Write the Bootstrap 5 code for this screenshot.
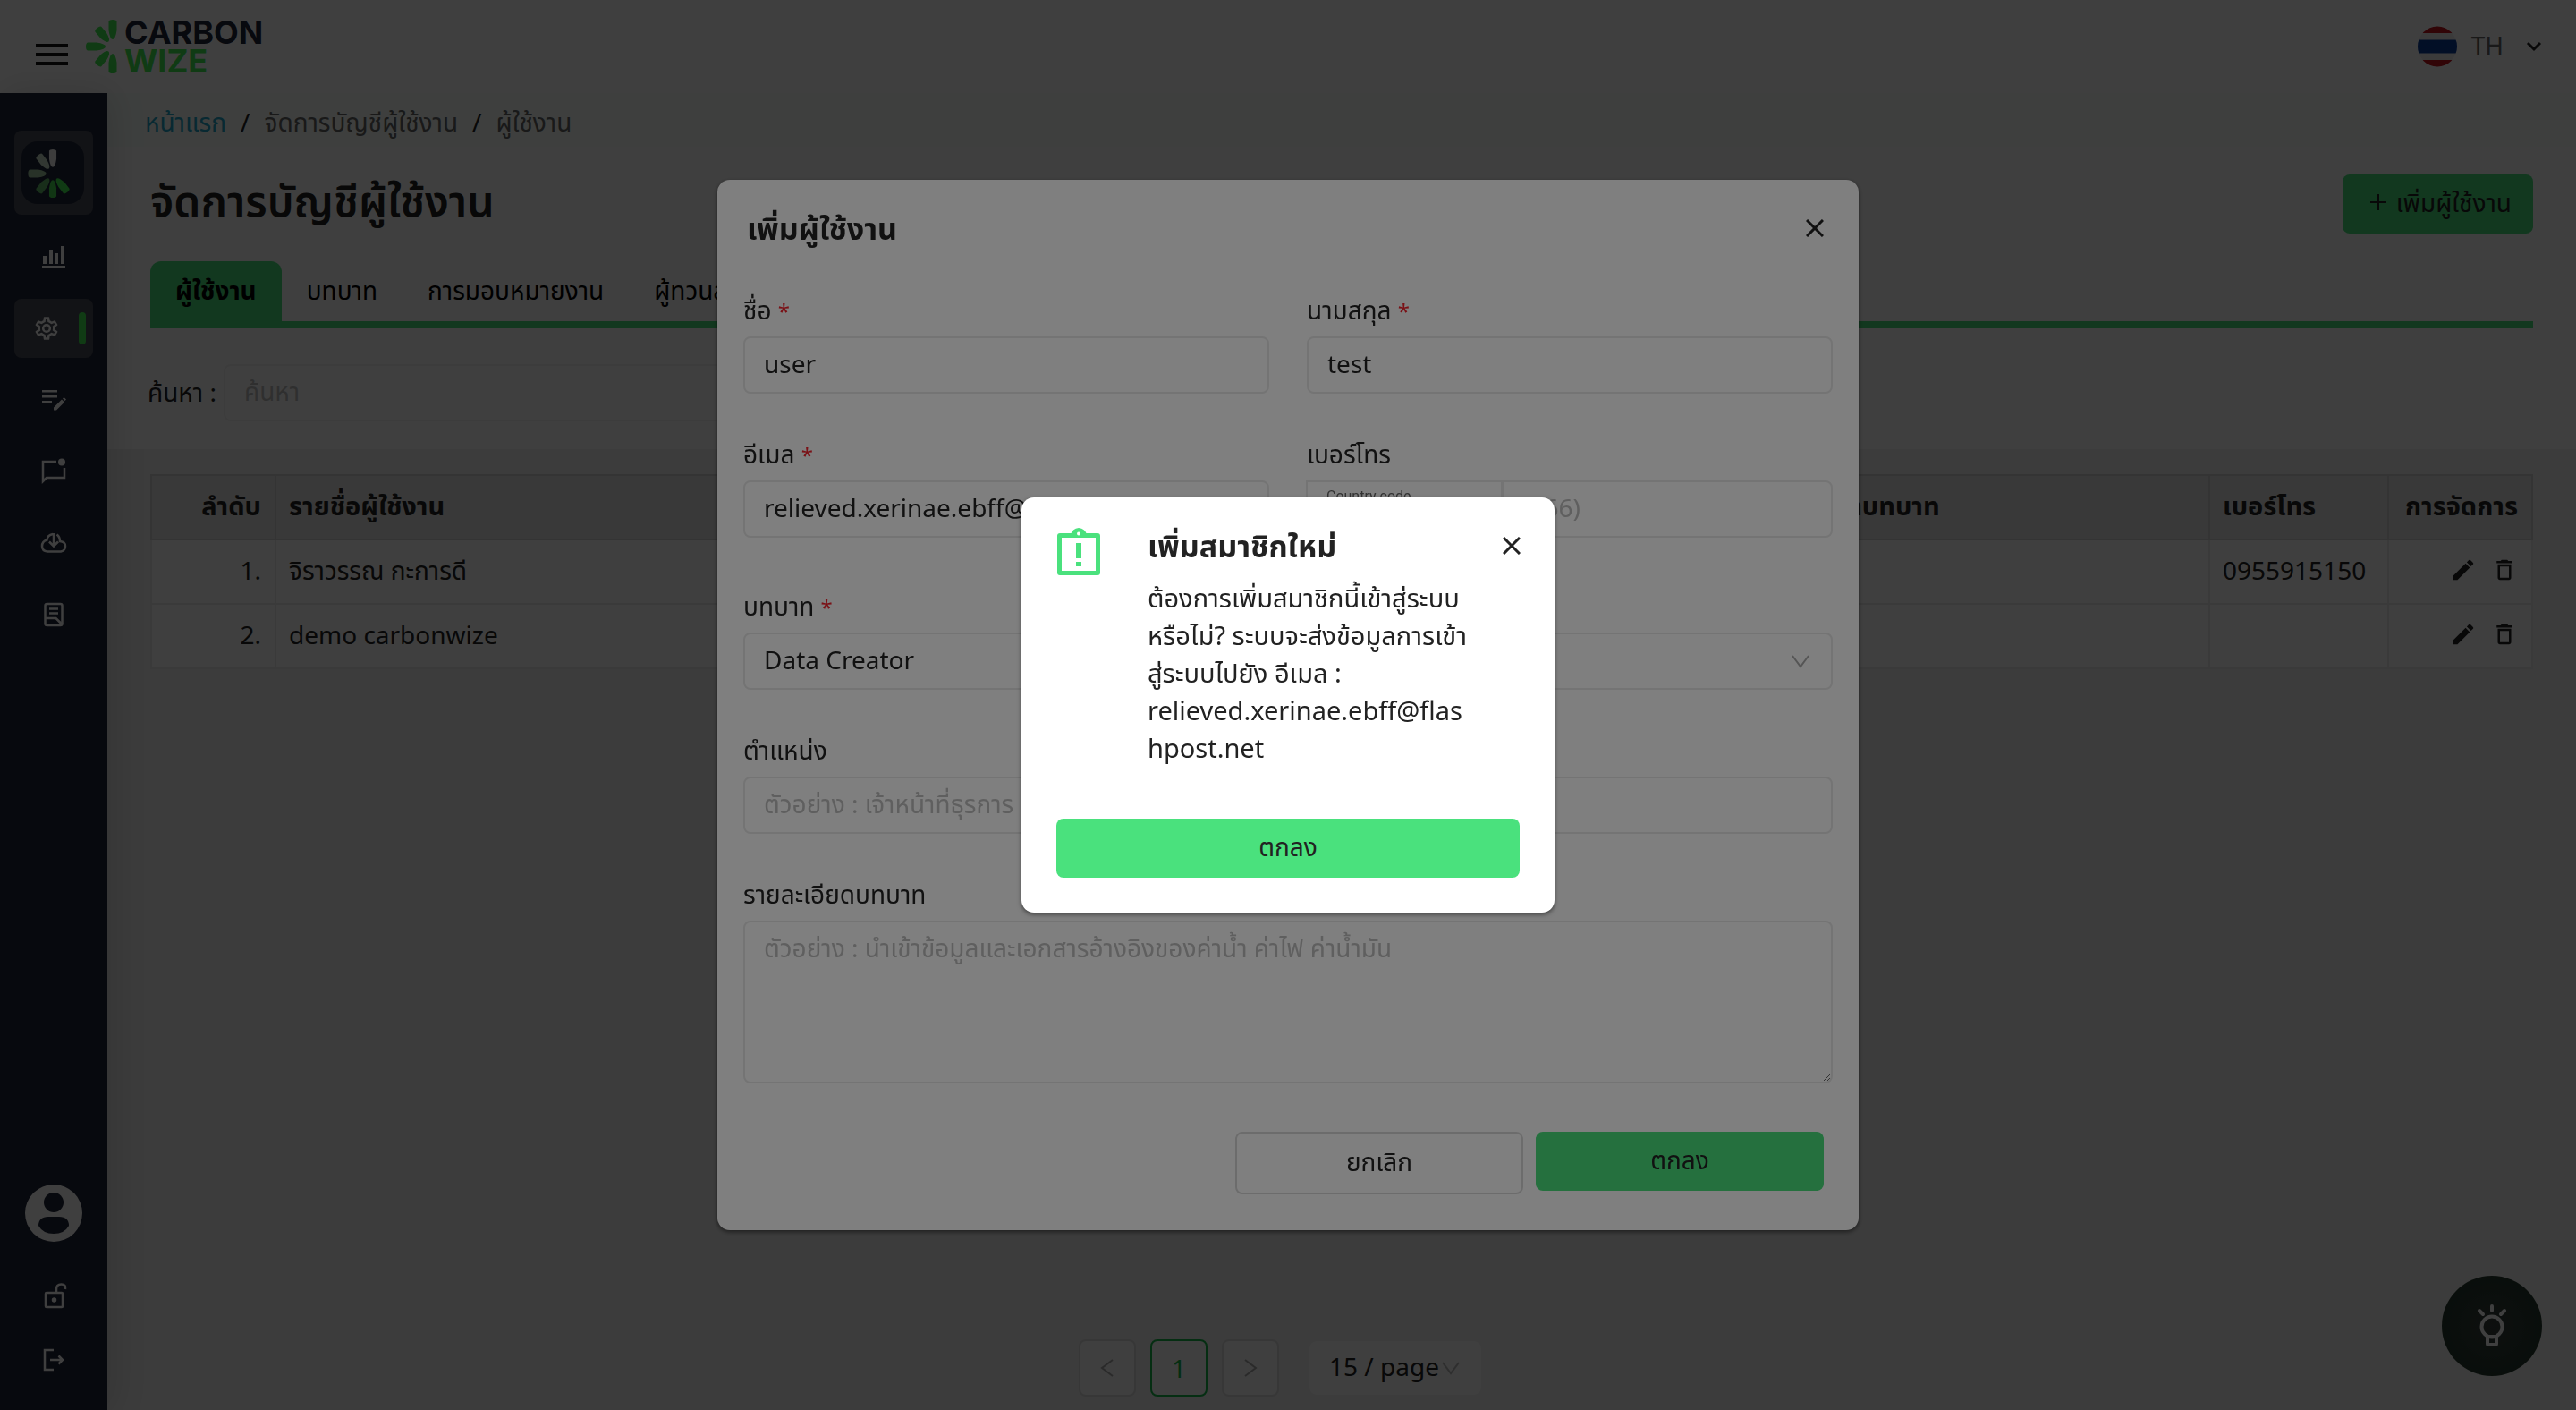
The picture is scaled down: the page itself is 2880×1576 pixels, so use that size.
<!DOCTYPE html>
<html lang="th">
<head>
<meta charset="utf-8">
<meta name="viewport" content="width=device-width, initial-scale=1">
<title>Carbon Wize</title>
<link href="https://cdn.jsdelivr.net/npm/bootstrap@5.3.0/dist/css/bootstrap.min.css" rel="stylesheet">
<style>
:root { --cw-green: #4ae17d; --cw-navy: #1e2438; --cw-ink: #222; --cw-line: #e8e8e8; }
body { font-family: "Noto Sans", "Noto Sans Thai", sans-serif; font-size: 28px; line-height: 44px; color: var(--cw-ink); background: #f0f0f0; }
svg { display: block; flex: none; }
.form-control, .form-select, .btn { font-size: 28px; line-height: 44px; color: var(--cw-ink); border-radius: 8px; }
.form-control, .form-select { padding: 6px 21px 10px; border: 2px solid var(--cw-line); background-color: #fff; }
.form-control::placeholder { color: #bfbfbf; }
.btn { padding: 9px 24px 13px; border: 0; }
.btn-cw { background: var(--cw-green); }
.btn-ghost { border: 2px solid #d9d9d9; }

.topbar { height: 104px; background: #fff; padding: 0 29px 0 36px; }
.burger { width: 48px; height: 48px; }
.brand-name { font: 700 36px/32px Inter, sans-serif; color: var(--cw-navy); }
.brand-name span { color: #40ee50; }
.lang { color: #666; }

.side { width: 120px; background: var(--cw-navy); color: #fff; padding: 42px 0 20px; box-shadow: 4px 0 40px rgba(0,0,0,.14); position: relative; }
.side a { color: #fff; width: 88px; border-radius: 8px; }
.side .home-tile { height: 94px; background: #4a4d58; padding: 12px 8px; margin-bottom: 7px; }
.home-tile svg { background: var(--cw-navy); border-radius: 18px; }
.side .nav-tile { height: 66px; margin: 7px 0; }
.side .nav-tile.active { background: #4a4d58; padding: 0 8px 0 22px; justify-content: space-between; }
.active-bar { width: 8px; height: 36px; border-radius: 4px; background: #40ee50; }
.side .foot-tile { height: 72px; }

.crumbs { height: 60px; padding: 4px 42px 0; background: #f8fffb; color: #666; }
.crumbs .breadcrumb { --bs-breadcrumb-divider-color: var(--cw-ink); --bs-breadcrumb-item-padding-x: 16px; }
.crumbs a { color: #22a6c8; text-decoration: none; }
.panel { background: #fff; padding: 31px 48px 31px; }
.page-title { font-size: 48px; line-height: 58px; font-weight: 600; margin: 0 0 8px; }
.cw-tabs { border-bottom: 8px solid var(--cw-green); margin-top: 31px; }
.cw-tabs .nav-link { padding: 11px 28px; height: 67px; border: 0; border-radius: 12px 12px 0 0; color: #000; line-height: 42px; }
.cw-tabs .nav-link.active { background: var(--cw-green); font-weight: 700; }
.finder { margin: 40px 0 0 -3px; }
.finder label { padding-bottom: 3px; }
.finder input { width: 600px; border-color: #f2f2f2; }
.list-area { padding: 28px 48px 15px; }
.cw-table { border: 2px solid #e0e0e0; margin: 0; }
.cw-table > :not(caption) > * > * { padding: 12px 15px 16px 14px; border: 2px solid #e8e8e8; height: 72px; line-height: 42px; color: var(--cw-ink); background: #fdfdfd; vertical-align: middle; }
.cw-table > thead > tr > th { background: #e4e4e4; border-color: #d0d0d0; font-size: 29px; }
.pager { padding-right: 138px; }
.pager .page-btn { width: 64px; height: 64px; padding: 0; border: 2px solid #ddd; background: #fdfdfd; color: #aaa; border-radius: 8px; }
.pager .page-btn.current { border-color: #14b848; color: #14b848; }
.pager .form-select { width: 192px; height: 60px; padding: 4px 0 8px 22px; border: 0; margin-left: 18px; background-color: #fdfdfd; background-position: right 23px center; background-size: 22px; background-image: url("data:image/svg+xml,%3Csvg xmlns='http://www.w3.org/2000/svg' viewBox='0 0 22 22'%3E%3Cpath d='M2 5l9 12 9-12' fill='none' stroke='%23bbb' stroke-width='2'/%3E%3C/svg%3E"); }
.helper { position: fixed; right: 38px; bottom: 38px; width: 112px; height: 112px; border-radius: 50%; border: 0; color: #fff; background: radial-gradient(#383f3c 0%, #263a30 65%, #1b3226 100%); }

.modal { background: rgba(0,0,0,.5); }
.modal-content { border: 0; border-radius: 14px; color: var(--cw-ink); box-shadow: 0 2px 5px rgba(0,0,0,.5); }
.user-modal { max-width: 1276px; }
.user-modal .modal-content { padding: 30px 29px 40px; }
.modal-heading { font-size: 34px; line-height: 48px; font-weight: 700; margin: 0; }
.modal-top { padding-left: 4px; margin-bottom: 45px; }
.x-btn { padding: 0; width: 40px; height: 40px; background: none; border: 0; }
.user-modal label { display: block; margin-bottom: 8px; }
.user-modal .row { --bs-gutter-x: 42px; margin-bottom: 45px; }
.user-modal .row.loose { margin-bottom: 54px; }
.must { color: #f5222d; font-size: 24px; line-height: 24px; }
.user-modal .form-select, .user-modal .form-control { height: 64px; }
.user-modal .form-select { background-position: right 23px center; background-size: 22px; background-image: url("data:image/svg+xml,%3Csvg xmlns='http://www.w3.org/2000/svg' viewBox='0 0 22 22'%3E%3Cpath d='M2 5l9 12 9-12' fill='none' stroke='%23aaa' stroke-width='2'/%3E%3C/svg%3E"); }
.user-modal textarea.form-control { height: 182px; }
.user-modal label.code-label { position: absolute; z-index: 6; left: 22px; top: 8px; font-size: 16px; line-height: 20px; font-family: Roboto, sans-serif; color: #666; margin: 0; }
.phone-code.form-control { flex: 0 0 220px; }
.user-modal .btn { width: 322px; }
.modal-actions { gap: 14px; padding-right: 10px; }
.confirm { max-width: 596px; }
.confirm .modal-content { padding: 30px 39px 29px; }
.confirm .x-btn { margin: 4px -11px 0 0; }
.confirm-text { width: 362px; font-size: 29px; line-height: 42px; overflow-wrap: anywhere; margin: 13px 0 58px; }
.confirm .btn { height: 66px; margin-bottom: 10px; }
</style>
</head>
<body>
<div class="min-vh-100 d-flex flex-column">
  <header class="topbar d-flex align-items-center">
    <button class="burger btn p-0 d-flex align-items-center" type="button" aria-label="เมนู">
      <svg width="44" height="44" viewBox="0 0 44 44"><path d="M4 21h36M4 31h36M4 41h36" stroke="#111" stroke-width="4"/></svg>
    </button>
    <a class="d-flex text-decoration-none align-items-center ms-2" href="#" aria-label="Carbon Wize">
      <svg width="47" height="64" viewBox="-34 -32 47 64" fill="#40ee50">
        <g id="leaf"><path d="M-4.500-28Q-4-30 0-30T4.500-28V-18Q3-8 0-8T-4.500-18Z"/></g>
        <use href="#leaf" transform="rotate(-40) scale(1 .9)"/><use href="#leaf" transform="rotate(-90)"/><use href="#leaf" transform="rotate(-140) scale(1 .9)"/><use href="#leaf" transform="rotate(180)"/>
      </svg>
      <div class="brand-name">CARBON<br><span>WIZE</span></div>
    </a>
    <button class="btn lang ms-auto p-0 d-flex align-items-center" type="button">
      <svg width="44" height="46" viewBox="0 0 44 46"><clipPath id="fc"><ellipse cx="22" cy="23" rx="22" ry="22.500"/></clipPath><g clip-path="url(#fc)"><path fill="#eee" d="M0 0h44v46H0z"/><path fill="#c4141c" d="M0 0h44v8H0zM0 38h44v8H0z"/><path fill="#0b3c9b" d="M0 15.500h44v15H0z"/></g></svg>
      <span class="px-3 pb-1">TH</span>
      <svg class="mx-1" width="28" height="28" viewBox="0 0 28 28"><path d="M7 10l7 7 7-7" fill="none" stroke="#222" stroke-width="3"/></svg>
    </button>
  </header>

  <div class="d-flex flex-grow-1">
    <nav class="side d-flex flex-column align-items-center">
      <a class="home-tile d-block" href="#" aria-label="หน้าแรก">
        <svg width="70" height="70" viewBox="-35 -36 70 70">
          <use href="#leaf" fill="#f4f4f4" transform="scale(.9)"/><use href="#leaf" fill="#c8dcc8" transform="rotate(-38) scale(.95 .88)"/><use href="#leaf" fill="#a0c8a0" transform="rotate(-90) scale(1 .92)"/><use href="#leaf" fill="#60b868" transform="rotate(-142) scale(.95 .88)"/><use href="#leaf" fill="#44d850" transform="rotate(180) scale(.9)"/><use href="#leaf" fill="#40ee50" transform="rotate(142) scale(.95 .88)"/>
        </svg>
      </a>
      <a class="nav-tile d-flex align-items-center justify-content-center" href="#" aria-label="รายงาน"><svg width="28" height="28" viewBox="0 0 28 28" fill="currentColor"><path d="M1 24h26v3H1zM2 13h4v9H2zM9 6h4v16H9zM15 10h4v12h-4zM22 2h4v20h-4z"/></svg></a>
      <a class="nav-tile active d-flex align-items-center" href="#" aria-label="ตั้งค่า"><svg width="28" height="28" viewBox="1 1 22 22" fill="currentColor"><path d="M19.430 12.980c.04-.32.07-.64.07-.98 0-.34-.03-.66-.07-.98l2.110-1.650c.19-.15.24-.42.12-.64l-2-3.460c-.09-.16-.26-.25-.44-.25-.06 0-.12.01-.17.03l-2.490 1c-.52-.4-1.080-.73-1.690-.98l-.38-2.650C14.460 2.180 14.250 2 14 2h-4c-.25 0-.46.18-.49.42l-.38 2.650c-.61.25-1.170.59-1.690.98l-2.490-1c-.06-.02-.12-.03-.18-.03-.17 0-.34.09-.43.25l-2 3.460c-.13.22-.07.49.12.64l2.110 1.650c-.04.32-.07.65-.07.98s.03.66.07.98l-2.110 1.650c-.19.15-.24.42-.12.64l2 3.460c.09.16.26.25.44.25.06 0 .12-.01.17-.03l2.490-1c.52.4 1.080.73 1.690.98l.38 2.650c.03.24.24.42.49.42h4c.25 0 .46-.18.49-.42l.38-2.650c.61-.25 1.170-.59 1.690-.98l2.490 1c.06.02.12.03.18.03.17 0 .34-.09.43-.25l2-3.460c.12-.22.07-.49-.12-.64l-2.110-1.650zm-1.980-1.710c.04.31.05.52.05.73s-.02.43-.05.73l-.14 1.130.89.7 1.080.84-.7 1.210-1.270-.51-1.040-.42-.9.68c-.43.32-.84.56-1.250.73l-1.060.43-.16 1.130-.2 1.350h-1.400l-.19-1.350-.16-1.130-1.060-.43c-.43-.18-.83-.41-1.230-.71l-.91-.7-1.060.43-1.270.51-.7-1.210 1.080-.84.89-.7-.14-1.130c-.03-.31-.05-.54-.05-.74s.02-.43.05-.73l.14-1.130-.89-.7-1.080-.84.7-1.210 1.270.51 1.040.42.9-.68c.43-.32.84-.56 1.250-.73l1.060-.43.16-1.130.2-1.350h1.390l.19 1.350.16 1.130 1.060.43c.43.18.83.41 1.230.71l.91.7 1.060-.43 1.270-.51.7 1.210-1.070.85-.89.7.14 1.130zM12 8a4 4 0 1 0 0 8 4 4 0 0 0 0-8zm0 6a2 2 0 1 1 0-4 2 2 0 0 1 0 4z"/></svg><span class="active-bar"></span></a>
      <a class="nav-tile d-flex align-items-center justify-content-center" href="#" aria-label="บันทึก"><svg width="28" height="28" viewBox="0 0 28 28" fill="currentColor"><path d="M1 3h17v2.500H1zM1 9h17v2.500H1zM1 15h11v2.500H1zM14 22.500l9-9 3 3-9 9h-3zM24 12.500l1.500-1.500 2.500 2.500-1.500 1.500z"/></svg></a>
      <a class="nav-tile d-flex align-items-center justify-content-center" href="#" aria-label="ข้อความ"><svg width="28" height="30" viewBox="0 0 28 30"><path d="M17 4H2v22l4-4h20V11" fill="none" stroke="currentColor" stroke-width="2.500"/><circle cx="23" cy="4.500" r="4" fill="currentColor"/></svg></a>
      <a class="nav-tile d-flex align-items-center justify-content-center" href="#" aria-label="ดาวน์โหลด"><svg width="30" height="26" viewBox="0 0 30 26" fill="none" stroke="currentColor" stroke-width="2.500"><path d="M14 3Q8 4 7.500 9.500Q2 11 2 16.500T8 22.500h15q5-1 5-6t-6-5.500Q22 6 18.500 3.500M15 2v14M10 11.500l5 5 5-5"/></svg></a>
      <a class="nav-tile d-flex align-items-center justify-content-center" href="#" aria-label="เอกสาร"><svg width="24" height="28" viewBox="0 0 24 28" fill="none" stroke="currentColor" stroke-width="2.500"><rect x="2.500" y="2" width="19" height="24" rx="2"/><path d="M7 7.500h10M7 12.500h10M2.500 18h12l7 7"/></svg></a>
      <a class="mt-auto d-flex justify-content-center mb-4" href="#" aria-label="โปรไฟล์"><svg width="64" height="64" viewBox="0 0 64 64"><circle cx="32" cy="32" r="32" fill="#fff"/><g fill="#1e2438"><circle cx="32" cy="20" r="11"/><path d="M15 46q0-10 11-10h12q11 0 11 10-5 9-17 9t-17-9z"/></g></svg></a>
      <a class="foot-tile d-flex align-items-center justify-content-center" href="#" aria-label="ปลดล็อก"><svg width="30" height="30" viewBox="0 0 30 30" fill="none" stroke="currentColor" stroke-width="2.500"><rect x="6" y="12" width="19" height="16" rx="1"/><path d="M18 12V8q0-5.500 5.500-5.500T28 8"/><circle cx="15.500" cy="20" r="1.500" fill="currentColor"/></svg></a>
      <a class="foot-tile d-flex align-items-center justify-content-center" href="#" aria-label="ออกจากระบบ"><svg width="26" height="26" viewBox="0 0 26 26" fill="none" stroke="currentColor" stroke-width="2.500"><path d="M13 2H3v22h10M9 13h14M18.500 8.500L23 13l-4.500 4.500"/></svg></a>
    </nav>

    <main class="flex-grow-1 d-flex flex-column">
      <nav class="crumbs d-flex align-items-center" aria-label="breadcrumb">
        <ol class="breadcrumb m-0">
          <li class="breadcrumb-item"><a href="#">หน้าแรก</a></li>
          <li class="breadcrumb-item">จัดการบัญชีผู้ใช้งาน</li>
          <li class="breadcrumb-item">ผู้ใช้งาน</li>
        </ol>
      </nav>
      <section class="panel">
        <div class="d-flex justify-content-between align-items-center">
          <h1 class="page-title">จัดการบัญชีผู้ใช้งาน</h1>
          <button class="btn btn-cw d-flex align-items-center gap-1" type="button"><svg width="32" height="24" viewBox="0 0 32 24"><path d="M16 3v18M7 12h18" stroke="#222" stroke-width="2"/></svg>เพิ่มผู้ใช้งาน</button>
        </div>
        <ul class="nav cw-tabs">
          <li><a class="nav-link active" href="#">ผู้ใช้งาน</a></li>
          <li><a class="nav-link" href="#">บทบาท</a></li>
          <li><a class="nav-link" href="#">การมอบหมายงาน</a></li>
          <li><a class="nav-link" href="#">ผู้ทวนสอบ</a></li>
        </ul>
        <div class="finder d-flex align-items-center gap-2">
          <label for="q">ค้นหา :</label>
          <input class="form-control" id="q" type="text" placeholder="ค้นหา">
        </div>
      </section>
      <section class="list-area flex-grow-1 d-flex flex-column">
        <table class="table cw-table">
          <colgroup><col style="width:139px"><col style="width:1622px"><col><col style="width:200px"><col style="width:161px"></colgroup>
          <thead><tr><th class="text-end">ลำดับ</th><th>รายชื่อผู้ใช้งาน</th><th>รายละเอียดบทบาท</th><th>เบอร์โทร</th><th class="text-end">การจัดการ</th></tr></thead>
          <tbody>
            <tr><td class="text-end">1.</td><td>จิราวรรณ กะการดี</td><td></td><td>0955915150</td><td><div class="d-flex justify-content-end gap-3 tools"><button class="btn p-0" type="button" aria-label="แก้ไข"><svg width="30" height="30" viewBox="0 0 24 24" fill="#222"><path d="M3 17.250V21h3.750L17.810 9.940l-3.750-3.750L3 17.250zM20.710 7.040a1 1 0 0 0 0-1.410l-2.340-2.340a1 1 0 0 0-1.410 0l-1.830 1.830 3.750 3.750 1.830-1.830z"/></svg></button><button class="btn p-0" type="button" aria-label="ลบ"><svg width="30" height="30" viewBox="0 0 24 24" fill="#222"><path d="M16 9v10H8V9h8m-1.500-6h-5l-1 1H5v2h14V4h-3.500l-1-1zM18 7H6v12c0 1.100.9 2 2 2h8c1.100 0 2-.9 2-2V7z"/></svg></button></div></td></tr>
            <tr><td class="text-end">2.</td><td>demo carbonwize</td><td></td><td></td><td><div class="d-flex justify-content-end gap-3 tools"><button class="btn p-0" type="button" aria-label="แก้ไข"><svg width="30" height="30" viewBox="0 0 24 24" fill="#222"><path d="M3 17.250V21h3.750L17.810 9.940l-3.750-3.750L3 17.250zM20.710 7.040a1 1 0 0 0 0-1.410l-2.340-2.340a1 1 0 0 0-1.410 0l-1.830 1.830 3.750 3.750 1.830-1.830z"/></svg></button><button class="btn p-0" type="button" aria-label="ลบ"><svg width="30" height="30" viewBox="0 0 24 24" fill="#222"><path d="M16 9v10H8V9h8m-1.500-6h-5l-1 1H5v2h14V4h-3.500l-1-1zM18 7H6v12c0 1.100.9 2 2 2h8c1.100 0 2-.9 2-2V7z"/></svg></button></div></td></tr>
          </tbody>
        </table>
        <div class="pager mt-auto d-flex justify-content-center align-items-center gap-3">
          <button class="page-btn d-flex align-items-center justify-content-center" type="button" aria-label="ก่อนหน้า"><svg width="24" height="24" viewBox="0 0 24 24"><path d="M18 3L6 12l12 9" fill="none" stroke="currentColor" stroke-width="2"/></svg></button>
          <button class="page-btn current" type="button">1</button>
          <button class="page-btn d-flex align-items-center justify-content-center" type="button" aria-label="ถัดไป"><svg width="24" height="24" viewBox="0 0 24 24"><path d="M6 3l12 9-12 9" fill="none" stroke="currentColor" stroke-width="2"/></svg></button>
          <select class="form-select" aria-label="จำนวนต่อหน้า"><option>15 / page</option></select>
        </div>
      </section>
    </main>
  </div>
</div>

<button class="helper d-flex align-items-center justify-content-center" type="button" aria-label="ช่วยเหลือ">
  <svg width="36" height="50" viewBox="0 0 36 50" fill="none" stroke="currentColor" stroke-width="4" stroke-linecap="round"><circle cx="18" cy="26" r="11.500"/><path d="M18 3v5M4 8l4 4M32 8l-4 4"/><rect x="13" y="37" width="10" height="9" rx="1"/></svg>
</button>

<div class="modal d-block" tabindex="-1">
  <div class="modal-dialog modal-dialog-centered user-modal">
    <form class="modal-content">
      <div class="modal-top d-flex justify-content-between align-items-center">
        <h2 class="modal-heading">เพิ่มผู้ใช้งาน</h2>
        <button class="x-btn d-flex align-items-center justify-content-center" type="button" aria-label="ปิด"><svg width="20" height="20" viewBox="0 0 20 20"><path d="M1 1l18 18M19 1L1 19" stroke="#222" stroke-width="3"/></svg></button>
      </div>
      <div class="row">
        <div class="col-6"><label for="fn">ชื่อ <span class="must">*</span></label><input class="form-control" id="fn" type="text" value="user"></div>
        <div class="col-6"><label for="ln">นามสกุล <span class="must">*</span></label><input class="form-control" id="ln" type="text" value="test"></div>
      </div>
      <div class="row loose">
        <div class="col-6"><label for="em">อีเมล <span class="must">*</span></label><input class="form-control" id="em" type="email" value="relieved.xerinae.ebff@flashpost.net"></div>
        <div class="col-6"><label for="ph">เบอร์โทร</label>
          <div class="input-group position-relative">
            <label class="code-label" for="cc">Country code</label>
            <input class="form-control phone-code" id="cc" type="text">
            <input class="form-control" id="ph" type="tel" placeholder="(+66)">
          </div>
        </div>
      </div>
      <div class="row"><div class="col-12"><label for="role">บทบาท <span class="must">*</span></label><select class="form-select" id="role"><option>Data Creator</option></select></div></div>
      <div class="row"><div class="col-12"><label for="pos">ตำแหน่ง</label><input class="form-control" id="pos" type="text" placeholder="ตัวอย่าง : เจ้าหน้าที่ธุรการ"></div></div>
      <div class="row loose"><div class="col-12"><label for="desc">รายละเอียดบทบาท</label><textarea class="form-control" id="desc" placeholder="ตัวอย่าง : นำเข้าข้อมูลและเอกสารอ้างอิงของค่าน้ำ ค่าไฟ ค่าน้ำมัน"></textarea></div></div>
      <div class="modal-actions d-flex justify-content-end align-items-start">
        <button class="btn btn-ghost" type="button">ยกเลิก</button>
        <button class="btn btn-cw" type="button">ตกลง</button>
      </div>
    </form>
  </div>
</div>

<div class="modal d-block" tabindex="-1">
  <div class="modal-dialog modal-dialog-centered confirm">
    <div class="modal-content">
      <div class="d-flex align-items-start">
        <svg width="54" height="60" viewBox="0 0 54 60"><path d="M4 10h42a3 3 0 0 1 3 3v41a3 3 0 0 1-3 3H4a3 3 0 0 1-3-3V13a3 3 0 0 1 3-3zM6 15v37h38V15z" fill="#4ae17d" fill-rule="evenodd"/><path d="M16 11q2-6 9-7 7 1 9 7z" fill="#4ae17d"/><circle cx="25" cy="10.500" r="2" fill="#fff"/><path d="M22 21h6v17h-6zM22 42h6v5h-6z" fill="#4ae17d"/></svg>
        <div class="ms-5">
          <h2 class="modal-heading">เพิ่มสมาชิกใหม่</h2>
          <p class="confirm-text">ต้องการเพิ่มสมาชิกนี้เข้าสู่ระบบหรือไม่? ระบบจะส่งข้อมูลการเข้าสู่ระบบไปยัง อีเมล : relieved.xerinae.ebff@flashpost.net</p>
        </div>
        <button class="x-btn d-flex align-items-center justify-content-center ms-auto" type="button" aria-label="ปิด"><svg width="20" height="20" viewBox="0 0 20 20"><path d="M1 1l18 18M19 1L1 19" stroke="#222" stroke-width="3"/></svg></button>
      </div>
      <button class="btn btn-cw w-100" type="button">ตกลง</button>
    </div>
  </div>
</div>
<script src="https://cdn.jsdelivr.net/npm/bootstrap@5.3.0/dist/js/bootstrap.bundle.min.js"></script>
</body>
</html>
